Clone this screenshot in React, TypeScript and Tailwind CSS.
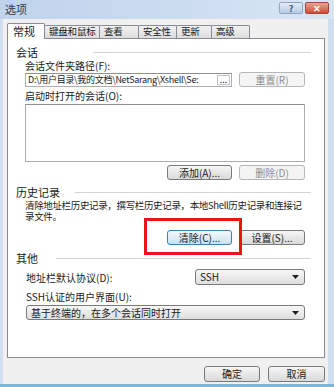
import React from 'react';

// ===== SMALL PARTS =====
interface BtnProps {
  children: React.ReactNode;
  disabled?: boolean;
  focused?: boolean;
  className?: string;
}

const Btn: React.FC<BtnProps> = ({ children, disabled, focused, className = '' }) => {
  const look = disabled
    ? 'border-[#b4b8bb] bg-[#f4f4f4] text-[#8e8e8e]'
    : focused
      ? 'border-[#3c7fb1] bg-linear-to-b from-[#f3f8fc] to-[#cfe0ec] text-[#1a1a1a]'
      : 'border-[#7a7a7a] bg-linear-to-b from-[#f6f6f6] to-[#d9d9d9] text-[#1a1a1a]';
  return (
    <div
      className={`flex items-center justify-center whitespace-nowrap rounded-[3px] border text-[10px] leading-none ${look} ${className}`}
    >
      {children}
    </div>
  );
};

const Arrow = () => (
  <svg width="7" height="4" viewBox="0 0 7 4" className="shrink-0">
    <path d="M0 0 H7 L3.5 4 Z" fill="#222" />
  </svg>
);

const Combo: React.FC<{ value: string; className?: string }> = ({ value, className = '' }) => (
  <div
    className={`flex items-center justify-between rounded-[3px] border border-[#7a7a7a] bg-linear-to-b from-[#f7f7f7] to-[#dedede] pl-[4px] pr-[5px] text-[10px] leading-none text-[#1a1a1a] ${className}`}
  >
    <span className="whitespace-nowrap">{value}</span>
    <Arrow />
  </div>
);

const GroupHeader: React.FC<{ label: string; lineStart: number }> = ({ label, lineStart }) => (
  <div className="flex h-[13px] items-center pl-[8px] pr-[13px]">
    <span className="whitespace-nowrap text-[11px] leading-[13px] text-[#1a1a1a]" style={{ width: lineStart }}>
      {label}
    </span>
    <div className="h-px flex-1 bg-[#d4d4d4]" />
  </div>
);

const tabs = [
  { label: '常规', w: 'w-[38px]' },
  { label: '键盘和鼠标', w: 'w-[56px]' },
  { label: '查看', w: 'w-[40px]' },
  { label: '安全性', w: 'w-[39px]' },
  { label: '更新', w: 'w-[36px]' },
  { label: '高级', w: 'w-[39px]' },
];

// ===== DIALOG =====
export default function App() {
  return (
    <div className="flex h-[387px] w-[334px] flex-col overflow-hidden border-b-[3px] border-[#7db6d4] bg-[#d0dff0] font-['Noto_Sans_CJK_SC',sans-serif] text-[#1a1a1a]">
      {/* title bar */}
      <div className="flex h-[19px] shrink-0 items-start justify-between bg-linear-to-r from-[#bfd3ec] to-[#d8e5f3] pl-[5px] pr-[5px]">
        <span className="mt-[2px] text-[11px] leading-[14px] text-[#2b3a4a]">选项</span>
        <div className="mt-[2px] flex gap-[2px]">
          <div className="flex h-[12px] w-[24px] items-center justify-center rounded-[2px] border border-[#8ea5c2] bg-linear-to-b from-[#e3ecf6] to-[#b7cbe3] text-[9px] font-bold leading-none text-[#3e5b82]">
            ?
          </div>
          <div className="flex h-[12px] w-[24px] items-center justify-center rounded-[2px] border border-[#a3473a] bg-linear-to-b from-[#eca294] to-[#cf4a33] text-[9px] font-bold leading-none text-white">
            ✕
          </div>
        </div>
      </div>

      {/* body */}
      <div className="ml-[3px] mr-[6px] flex flex-1 flex-col bg-[#f0f0f0] pl-[4px] pr-[3px] pt-[4px]">
        {/* tabs */}
        <div className="relative z-10 -mb-px flex h-[16px] items-end">
          {tabs.map((t, i) =>
            i === 0 ? (
              <div
                key={t.label}
                className={`relative z-10 flex h-[16px] ${t.w} items-start whitespace-nowrap rounded-t-[2px] border border-b-0 border-[#898c95] bg-white pl-[5px] pt-[1px] text-[11px] leading-[13px]`}
              >
                {t.label}
              </div>
            ) : (
              <div
                key={t.label}
                className={`-ml-px mb-px flex h-[13px] ${t.w} items-center overflow-hidden whitespace-nowrap rounded-t-[2px] border border-b-0 border-[#898c95] bg-linear-to-b from-[#f2f2f2] to-[#dcdcdc] pl-[4px] text-[9.5px] leading-none tracking-[-0.2px]`}
              >
                {t.label}
              </div>
            ),
          )}
        </div>

        {/* panel */}
        <div className="flex h-[320px] flex-col border border-[#898c95] bg-white pt-[7px]">
          {/* 会话 */}
          <GroupHeader label="会话" lineStart={77} />
          <div className="flex flex-col pl-[17px] pr-[19px]">
            <div className="text-[10px] leading-[13px]">会话文件夹路径(F):</div>
            <div className="flex items-center gap-[7px]">
              <div className="flex h-[14px] w-[207px] items-center overflow-hidden border border-[#abadb3] border-t-[#8e8f8f] bg-white pl-[2px] pr-px">
                <span className="flex-1 whitespace-nowrap text-[9px] leading-none tracking-[-0.3px]">
                  D:\用户目录\我的文档\NetSarang\Xshell\Se:
                </span>
                <span className="flex h-[10px] w-[13px] shrink-0 items-center justify-center border border-[#c2c2c2] text-[9px] leading-none">
                  ...
                </span>
              </div>
              <Btn disabled className="h-[15px] w-[66px]">
                重置(R)
              </Btn>
            </div>
            <div className="mt-[2px] text-[10px] leading-[13px]">启动时打开的会话(O):</div>
            <div className="mt-[2px] h-[58px] border border-[#abadb3] border-t-[#8e8f8f] bg-white" />
            <div className="mt-[3px] flex justify-end gap-[7px]">
              <Btn className="h-[15px] w-[65px]">添加(A)...</Btn>
              <Btn disabled className="h-[15px] w-[66px]">
                删除(D)
              </Btn>
            </div>
          </div>

          {/* 历史记录 */}
          <div className="mt-[6px]">
            <GroupHeader label="历史记录" lineStart={59} />
          </div>
          <div className="flex flex-col pl-[17px] pr-[19px]">
            <div className="mt-[1px] whitespace-nowrap text-[9.5px] leading-[11px] tracking-[-0.35px]">
              <div>清除地址栏历史记录，撰写栏历史记录，本地Shell历史记录和连接记</div>
              <div>录文件。</div>
            </div>
            <div className="relative mt-[8px] flex justify-end gap-[7px]">
              <Btn focused className="h-[15px] w-[65px]">
                清除(C)...
              </Btn>
              <Btn className="h-[15px] w-[66px]">设置(S)...</Btn>
              {/* red annotation box */}
              <div className="pointer-events-none absolute left-[119px] top-[-12px] h-[37px] w-[98px] border-[3px] border-[#e8141a]" />
            </div>
          </div>

          {/* 其他 */}
          <div className="mt-[7px]">
            <GroupHeader label="其他" lineStart={40} />
          </div>
          <div className="flex flex-col pl-[18px] pr-[19px]">
            <div className="mt-[4px] flex items-center justify-between">
              <span className="text-[10px] leading-[13px]">地址栏默认协议(D):</span>
              <Combo value="SSH" className="h-[16px] w-[110px]" />
            </div>
            <div className="mt-[5px] text-[10px] leading-[13px]">SSH认证的用户界面(U):</div>
            <Combo value="基于终端的，在多个会话同时打开" className="mt-[2px] h-[15px]" />
          </div>
        </div>

        {/* footer */}
        <div className="mt-[8px] flex justify-end gap-[8px]">
          <Btn className="h-[16px] w-[56px] text-[10.5px]">确定</Btn>
          <Btn className="h-[16px] w-[57px] text-[10.5px]">取消</Btn>
        </div>
      </div>
    </div>
  );
}
